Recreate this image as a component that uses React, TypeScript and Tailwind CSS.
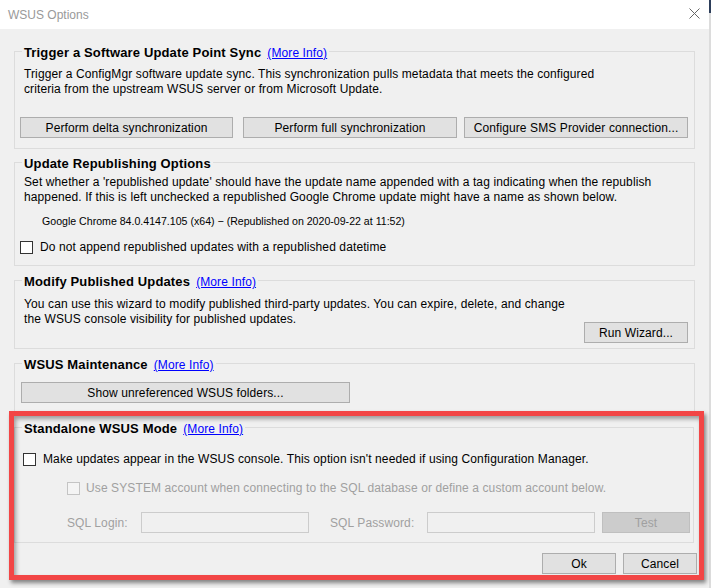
import React from "react";

const Btn = ({ children, className = "" }: { children: React.ReactNode; className?: string }) => (
  <div className={`h-[21px] flex items-center justify-center bg-[#e1e1e1] border border-[#adadad] text-black leading-none ${className}`}>
    {children}
  </div>
);

const Heading = ({ title, link }: { title: string; link?: boolean }) => (
  <div className="-mt-[7px] ml-[7px] px-[2px] bg-[#f0f0f0] w-fit h-[16px] leading-[16px] flex items-center whitespace-nowrap">
    <span className="font-bold text-[13px] tracking-[0.15px]">{title}</span>
    {link && <span className="ml-[6px] text-[#0000ff] underline">(More Info)</span>}
  </div>
);

const CheckBox = ({ disabled = false }: { disabled?: boolean }) => (
  <div
    className={`w-[13px] h-[13px] border shrink-0 ${
      disabled ? "border-[#c4c4c4] bg-[#f4f4f4]" : "border-[#333333] bg-white"
    }`}
  />
);

export default function App() {
  return (
    <div className="w-[711px] h-[588px] flex bg-[#f0f0f0] font-['Liberation_Sans',Arial,sans-serif] text-[12px] tracking-[0.11px] text-black overflow-hidden">
      <div className="w-[709px] flex flex-col relative">
        {/* Title bar */}
        <div className="h-[29px] bg-white flex items-center justify-between pl-[8px] shrink-0">
          <span className="text-[#999999] text-[12px] tracking-normal">WSUS Options</span>
          <svg width="11" height="11" viewBox="0 0 11 11" className="mr-[9px] mt-[-2px]">
            <path d="M0.5 0.5 L10.5 10.5 M10.5 0.5 L0.5 10.5" stroke="#666666" strokeWidth="1" fill="none" />
          </svg>
        </div>

        {/* Group 1 */}
        <div className="ml-[14px] w-[681px] mt-[22px] border border-[#dcdcdc] pb-[10px]">
          <Heading title="Trigger a Software Update Point Sync" link />
          <div className="mt-[6px] pl-[9px] leading-[15px]">
            <div>Trigger a ConfigMgr software update sync. This synchronization pulls metadata that meets the configured</div>
            <div>criteria from the upstream WSUS server or from Microsoft Update.</div>
          </div>
          <div className="mt-[20px] pl-[5px] flex">
            <Btn className="w-[213px]">Perform delta synchronization</Btn>
            <Btn className="w-[214px] ml-[10px]">Perform full synchronization</Btn>
            <Btn className="w-[224px] ml-[7px]">Configure SMS Provider connection...</Btn>
          </div>
        </div>

        {/* Group 2 */}
        <div className="ml-[14px] w-[681px] mt-[13px] border border-[#dcdcdc] pb-[10px]">
          <Heading title="Update Republishing Options" />
          <div className="mt-[3px] pl-[9px] leading-[15px]">
            <div>Set whether a 'republished update' should have the update name appended with a tag indicating when the republish</div>
            <div>happened. If this is left unchecked a republished Google Chrome update might have a name as shown below.</div>
          </div>
          <div className="mt-[9px] pl-[27px] leading-[14px] text-[10.6px] tracking-normal">
            Google Chrome 84.0.4147.105 (x64) − (Republished on 2020-09-22 at 11:52)
          </div>
          <div className="mt-[11px] pl-[5px] h-[16px] flex items-center">
            <CheckBox />
            <span className="ml-[7px]">Do not append republished updates with a republished datetime</span>
          </div>
        </div>

        {/* Group 3 */}
        <div className="ml-[14px] w-[681px] mt-[14px] border border-[#dcdcdc] pb-[5px]">
          <Heading title="Modify Published Updates" link />
          <div className="mt-[7px] pl-[9px] leading-[15px]">
            <div>You can use this wizard to modify published third-party updates. You can expire, delete, and change</div>
            <div>the WSUS console visibility for published updates.</div>
          </div>
          <div className="-mt-[5px] pr-[6px] flex justify-end">
            <Btn className="w-[104px]">Run Wizard...</Btn>
          </div>
        </div>

        {/* Group 4 */}
        <div className="ml-[14px] w-[681px] mt-[14px] border border-[#dcdcdc] pb-[8px]">
          <Heading title="WSUS Maintenance" link />
          <div className="mt-[9px] pl-[6px] flex">
            <Btn className="w-[329px]">Show unreferenced WSUS folders...</Btn>
          </div>
        </div>

        {/* Group 5 */}
        <div className="ml-[14px] w-[680px] mt-[15px] border border-[#dcdcdc] pb-[9px]">
          <Heading title="Standalone WSUS Mode" link />
          <div className="mt-[14px] pl-[8px] h-[16px] flex items-center">
            <CheckBox />
            <span className="ml-[7px]">Make updates appear in the WSUS console. This option isn't needed if using Configuration Manager.</span>
          </div>
          <div className="mt-[13px] pl-[52px] h-[16px] flex items-center text-[#a0a0a0]">
            <CheckBox disabled />
            <span className="ml-[6px]">Use SYSTEM account when connecting to the SQL database or define a custom account below.</span>
          </div>
          <div className="mt-[16px] pl-[52px] h-[21px] flex items-center text-[#a0a0a0]">
            <span className="w-[74px] shrink-0">SQL Login:</span>
            <div className="w-[168px] h-[21px] border border-[#cccccc] bg-[#f0f0f0] shrink-0" />
            <span className="ml-[21px] w-[97px] shrink-0">SQL Password:</span>
            <div className="w-[168px] h-[21px] border border-[#cccccc] bg-[#f0f0f0] shrink-0" />
            <div className="ml-[7px] w-[88px] h-[21px] border border-[#bfbfbf] bg-[#cccccc] flex items-center justify-center text-[#a0a0a0] shrink-0">
              Test
            </div>
          </div>
        </div>

        {/* Footer */}
        <div className="mt-[10px] pr-[12px] flex justify-end">
          <Btn className="w-[74px]">Ok</Btn>
          <Btn className="w-[74px] ml-[7px]">Cancel</Btn>
        </div>

        {/* Red annotation box overlay */}
        <div className="absolute left-[9px] top-[411px] w-[695px] h-[169px] border-[5px] border-[#f24646] shadow-[2px_3px_4px_rgba(0,0,0,0.45),inset_2px_3px_4px_rgba(0,0,0,0.35)] pointer-events-none" />
      </div>
      <div className="w-[2px] flex flex-col">
        <div className="h-[13px] bg-[#2d3e5a]" />
        <div className="flex-1 bg-[#dcdcdc]" />
      </div>
    </div>
  );
}
